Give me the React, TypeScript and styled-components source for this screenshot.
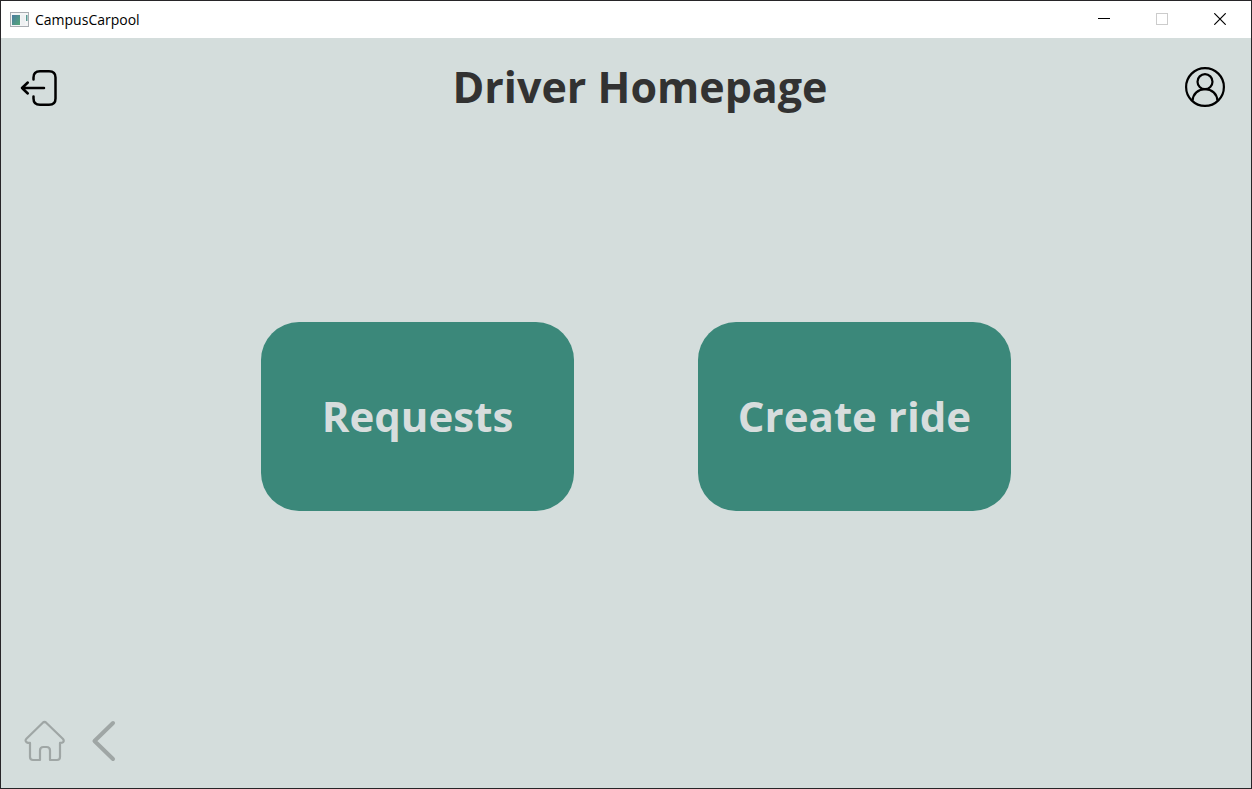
import React from "react";
import styled, { createGlobalStyle } from "styled-components";

const GlobalStyle = createGlobalStyle`
  * { box-sizing: border-box; }
  body { margin: 0; font-family: "Segoe UI", "Open Sans", "Noto Sans", sans-serif; }
`;

const Window = styled.div`
  display: flex;
  flex-direction: column;
  min-height: 100vh;
  border: 1px solid #272528;
  background: #d4dddc;
`;

const TitleBar = styled.header`
  display: flex;
  align-items: center;
  height: 37px;
  padding: 0 2px 0 9px;
  background: #ffffff;
`;

const AppName = styled.span`
  flex: 1;
  padding-left: 5px;
  font-size: 14px;
  line-height: 20px;
  color: #000000;
`;

const PlainButton = styled.button`
  display: flex;
  align-items: center;
  justify-content: center;
  padding: 0;
  border: 0;
  background: none;
  color: inherit;
  font: inherit;
  cursor: pointer;
  &:disabled { cursor: default; }
`;

const CaptionButton = styled(PlainButton)`
  align-self: flex-start;
  width: 58px;
  height: 36px;
  color: #000000;
  &:disabled { color: #cccccc; }
`;

const Toolbar = styled.div`
  display: flex;
  align-items: center;
  height: 98px;
  padding: 0 26px 0 18px;
`;

const PageTitle = styled.h1`
  flex: 1;
  margin: 0;
  padding-left: 36px;
  font-size: 43px;
  line-height: 60px;
  font-weight: 700;
  text-align: center;
  color: #323232;
`;

const Actions = styled.main`
  display: flex;
  flex: 1;
  flex-wrap: wrap;
  align-items: center;
  justify-content: center;
  gap: 124px;
  padding-left: 20px;
`;

const ActionButton = styled(PlainButton)`
  width: 313px;
  height: 189px;
  border-radius: 38px;
  background: #3b887a;
  color: #d7dddd;
  font-size: 42px;
  line-height: 60px;
  font-weight: 700;
`;

const BottomNav = styled.nav`
  display: flex;
  align-items: flex-start;
  gap: 26px;
  height: 92px;
  padding: 24px 0 0 22px;
`;

const NavButton = styled(PlainButton)`
  color: #9fa6a5;
`;

const AppIcon = () => (
  <svg width="20" height="16" viewBox="0 0 20 16" aria-hidden="true">
    <defs>
      <linearGradient id="pane" x1="0" y1="0" x2="1" y2="1">
        <stop offset="0" stopColor="#4a7aa0" />
        <stop offset="1" stopColor="#55a878" />
      </linearGradient>
    </defs>
    <rect x="0.5" y="0.5" width="18" height="14" fill="#f4f5f6" stroke="#a9adb2" />
    <rect x="2" y="3" width="8" height="10" fill="url(#pane)" />
    <rect x="11" y="3" width="4" height="10" fill="#eef0f2" />
    <rect x="16" y="3" width="1.500" height="6" fill="#5a9a94" />
  </svg>
);

const MinimizeIcon = () => (
  <svg width="12" height="12" viewBox="0 0 12 12" aria-hidden="true">
    <path d="M0 5.500H12" stroke="currentColor" />
  </svg>
);

const MaximizeIcon = () => (
  <svg width="12" height="12" viewBox="0 0 12 12" aria-hidden="true">
    <rect x="0.5" y="0.5" width="11" height="11" fill="none" stroke="currentColor" />
  </svg>
);

const CloseIcon = () => (
  <svg width="12" height="12" viewBox="0 0 12 12" aria-hidden="true">
    <path d="M0.300 0.300L11.700 11.700M11.700 0.300L0.300 11.700" stroke="currentColor" strokeWidth="1.200" />
  </svg>
);

const LogoutIcon = () => (
  <svg width="40" height="40" viewBox="0 0 40 40" fill="none" stroke="#000" strokeWidth="2.500" strokeLinecap="round" strokeLinejoin="round" aria-hidden="true">
    <path d="M14.500 12.500V10.500Q14.500 4.200 21 4.200H30Q36.500 4.200 36.500 10.500V31.500Q36.500 37.800 30 37.800H21Q14.500 37.800 14.500 31.500V29.500" />
    <path d="M25 21H3M8.800 15.500L3 21L8.800 26.500" />
  </svg>
);

const ProfileIcon = () => (
  <svg width="40" height="40" viewBox="0 0 40 40" fill="none" stroke="#000" strokeWidth="2.200" aria-hidden="true">
    <circle cx="20" cy="20" r="18.900" />
    <circle cx="20" cy="14.700" r="7.500" />
    <path d="M7.600 33.500C8 27 13 22.200 20 22.200S32 27 32.400 33.500" />
  </svg>
);

const HomeIcon = () => (
  <svg width="42" height="42" viewBox="0 0 42 42" fill="none" stroke="currentColor" strokeWidth="2.200" strokeLinejoin="round" aria-hidden="true">
    <path d="M19.800 2.700Q21.500 1.300 23.200 2.700L39.800 18.800Q41.500 20.700 40 22.200Q39.300 22.900 37 22.900V37Q37 40 34 40H27V30.500Q27 27 23.500 27H20.500Q17 27 17 30.500V40H10Q7 40 7 37V22.900Q4.700 22.900 3.500 22.200Q1.700 20.500 3.400 18.800Z" />
  </svg>
);

const BackIcon = () => (
  <svg width="26" height="42" viewBox="0 0 26 42" fill="none" stroke="currentColor" strokeWidth="4" strokeLinecap="round" strokeLinejoin="round" aria-hidden="true">
    <path d="M22 3L3.500 21L22 39" />
  </svg>
);

export default function App() {
  return (
    <>
      <GlobalStyle />
      <Window>
        <TitleBar>
          <AppIcon />
          <AppName>CampusCarpool</AppName>
          <CaptionButton aria-label="Minimize"><MinimizeIcon /></CaptionButton>
          <CaptionButton aria-label="Maximize" disabled><MaximizeIcon /></CaptionButton>
          <CaptionButton aria-label="Close"><CloseIcon /></CaptionButton>
        </TitleBar>
        <Toolbar>
          <PlainButton aria-label="Log out"><LogoutIcon /></PlainButton>
          <PageTitle>Driver Homepage</PageTitle>
          <PlainButton aria-label="Profile"><ProfileIcon /></PlainButton>
        </Toolbar>
        <Actions>
          <ActionButton>Requests</ActionButton>
          <ActionButton>Create ride</ActionButton>
        </Actions>
        <BottomNav aria-label="Page navigation">
          <NavButton aria-label="Home"><HomeIcon /></NavButton>
          <NavButton aria-label="Back"><BackIcon /></NavButton>
        </BottomNav>
      </Window>
    </>
  );
}
